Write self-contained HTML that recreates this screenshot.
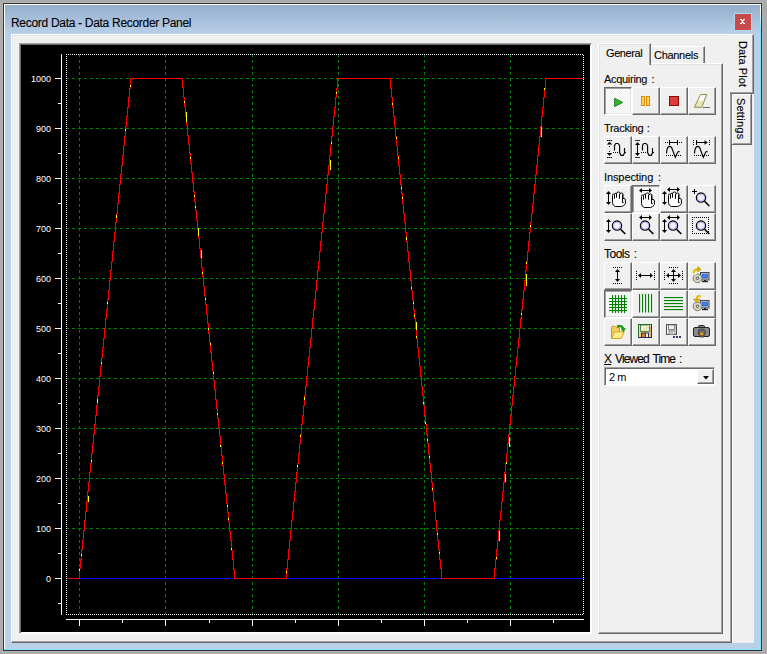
<!DOCTYPE html>
<html><head><meta charset="utf-8"><title>Record Data - Data Recorder Panel</title>
<style>
*{margin:0;padding:0;box-sizing:border-box}
html,body{width:767px;height:654px;overflow:hidden;background:#ababab;font-family:"Liberation Sans", sans-serif;position:relative}
div{position:absolute}
#ring{left:2px;top:2px;width:761px;height:650px;background:#b3b3b3}
#frame{left:3px;top:3px;width:759px;height:648px;background:#333}
#hl{left:4px;top:4px;width:757px;height:646px;background:#fff}
#hlr{left:760px;top:4px;width:1px;height:646px;background:linear-gradient(180deg,#fff 0,#fff 6px,#7fe3ff 26px,#7fe3ff 100%)}
#hlb{left:4px;top:649px;width:757px;height:1px;background:#7fe3ff}
#blue{left:5px;top:5px;width:755px;height:644px;background:linear-gradient(180deg,#94aecb 0px,#b9d0e9 29px,#bad0e8 100%)}
#title{left:11px;top:16px;font-size:12px;color:#000;-webkit-text-stroke:0.1px #000;white-space:nowrap;letter-spacing:-0.3px}
#close{left:735px;top:14px;width:16px;height:16px;background:#c84a4a;box-shadow:0 0 0 1px #b8d4ec}
#close svg{position:absolute;left:0;top:0}
#client{left:11px;top:34px;width:743px;height:609px;background:#f0f0f0}
#page{left:11px;top:34px;width:721px;height:609px;border-top:1px solid #fff;border-left:1px solid #fff;border-right:1px solid #696969;border-bottom:1px solid #696969;box-shadow:inset -1px -1px 0 #a0a0a0, inset 1px 1px 0 #e3e3e3}
#vtab1{left:730px;top:34px;width:24px;height:60px;background:#f0f0f0;border-top:1px solid #fff;border-right:1px solid #696969;border-bottom:1px solid #696969;box-shadow:inset -1px -1px 0 #a0a0a0}
#vtab2{left:731px;top:93px;width:21px;height:52px;background:#f0f0f0;border-left:1px solid #808080;border-top:1px solid #696969;border-right:1px solid #696969;border-bottom:1px solid #696969;box-shadow:inset 1px 1px 0 #fff, inset -1px -1px 0 #a0a0a0}
#pgw{left:732px;top:145px;width:1px;height:497px;background:#fff}
.vtxt{font-size:11px;white-space:nowrap;color:#000;-webkit-text-stroke:0.1px #000;transform-origin:0 0;transform:rotate(90deg) translate(0,-12px)}
#chartbox{left:19px;top:43px;width:573px;height:591px;background:#fff;border-top:1px solid #a0a0a0;border-left:1px solid #a0a0a0;border-right:1px solid #fff;border-bottom:1px solid #fff;box-shadow:inset 1px 1px 0 #696969}
#chart{position:absolute;left:0;top:0;font-family:"Liberation Sans", sans-serif;font-size:9px;fill:#fff}
#ipanel{left:598px;top:63px;width:125px;height:571px;background:#f0f0f0;border-top:1px solid #fff;border-left:1px solid #fff;border-right:1px solid #696969;border-bottom:1px solid #696969;box-shadow:inset -1px -1px 0 #a0a0a0, inset 1px 1px 0 #e3e3e3}
#tabGen{left:598px;top:43px;width:53px;height:22px;background:#f0f0f0;border-top:1px solid #fff;border-left:1px solid #fff;border-right:1px solid #696969;box-shadow:inset -1px 0 0 #a0a0a0, inset 1px 1px 0 #e3e3e3;font-size:11px;-webkit-text-stroke:0.1px #000;padding:3px 0 0 7px;letter-spacing:-0.4px}
#tabCh{left:651px;top:46px;width:54px;height:17px;background:#f0f0f0;border-top:1px solid #fff;border-right:1px solid #696969;box-shadow:inset -1px 0 0 #a0a0a0;font-size:11px;-webkit-text-stroke:0.1px #000;padding:2px 0 0 3px;letter-spacing:-0.3px}
.lbl{font-size:11px;white-space:nowrap;color:#000;-webkit-text-stroke:0.1px #000;letter-spacing:-0.3px;word-spacing:1.5px}
.btn{width:28px;height:28px;background:#f0f0f0;border-top:1px solid #fff;border-left:1px solid #fff;border-right:1px solid #696969;border-bottom:1px solid #696969;box-shadow:inset -1px -1px 0 #a0a0a0}
.btn.chk{border-top:1px solid #696969;border-left:1px solid #696969;border-right:1px solid #fff;border-bottom:1px solid #fff;box-shadow:inset 1px 1px 0 #a0a0a0, inset -1px -1px 0 #e3e3e3;background:repeating-conic-gradient(#f0f0f0 0 25%,#fff 0 50%) 0 0/2px 2px}
.btn svg{position:absolute;left:-1px;top:-1px}
#combo{left:604px;top:367px;width:111px;height:19px;background:#fff;border-top:1px solid #a0a0a0;border-left:1px solid #a0a0a0;border-right:1px solid #fff;border-bottom:1px solid #fff;box-shadow:inset 1px 1px 0 #696969}
#ctext{left:4px;top:3px;font-size:11px;letter-spacing:-0.5px}
#cbtn{left:92px;top:1px;width:17px;height:15px;background:#f0f0f0;border-top:1px solid #fff;border-left:1px solid #fff;border-right:1px solid #696969;border-bottom:1px solid #696969;box-shadow:inset -1px -1px 0 #a0a0a0}
#cbtn svg{position:absolute;left:5px;top:6px}
</style></head>
<body>
<div id="ring"></div><div id="frame"></div><div id="hl"></div><div id="hlr"></div><div id="hlb"></div><div id="blue"></div>
<div id="title">Record Data - Data Recorder Panel</div>
<div id="close"><svg width="16" height="16" viewBox="0 0 16 16" shape-rendering="crispEdges"><rect x="5" y="5" width="1" height="1" fill="#fff"/><rect x="6" y="5" width="1" height="1" fill="#fff"/><rect x="8" y="5" width="1" height="1" fill="#fff"/><rect x="9" y="5" width="1" height="1" fill="#fff"/><rect x="6" y="6" width="1" height="1" fill="#fff"/><rect x="7" y="6" width="1" height="1" fill="#fff"/><rect x="8" y="6" width="1" height="1" fill="#fff"/><rect x="7" y="7" width="1" height="1" fill="#fff"/><rect x="6" y="8" width="1" height="1" fill="#fff"/><rect x="7" y="8" width="1" height="1" fill="#fff"/><rect x="8" y="8" width="1" height="1" fill="#fff"/><rect x="5" y="9" width="1" height="1" fill="#fff"/><rect x="6" y="9" width="1" height="1" fill="#fff"/><rect x="8" y="9" width="1" height="1" fill="#fff"/><rect x="9" y="9" width="1" height="1" fill="#fff"/></svg></div>
<div id="client"></div>
<div id="page"></div>
<div id="vtab1"></div><div id="vtab2"></div><div id="pgw"></div>
<div class="vtxt" style="left:737px;top:41px;letter-spacing:0.1px">Data Plot</div>
<div class="vtxt" style="left:735px;top:98px;letter-spacing:0.2px">Settings</div>
<div id="chartbox"></div>
<svg id="chart" width="767" height="654" viewBox="0 0 767 654" shape-rendering="crispEdges"><rect x="21" y="45" width="569" height="587" fill="#000"/>
<line x1="79.5" y1="54" x2="79.5" y2="614" stroke="#008000" stroke-width="1" stroke-dasharray="3 3"/>
<line x1="165.5" y1="54" x2="165.5" y2="614" stroke="#008000" stroke-width="1" stroke-dasharray="3 3"/>
<line x1="252.5" y1="54" x2="252.5" y2="614" stroke="#008000" stroke-width="1" stroke-dasharray="3 3"/>
<line x1="338.5" y1="54" x2="338.5" y2="614" stroke="#008000" stroke-width="1" stroke-dasharray="3 3"/>
<line x1="424.5" y1="54" x2="424.5" y2="614" stroke="#008000" stroke-width="1" stroke-dasharray="3 3"/>
<line x1="510.5" y1="54" x2="510.5" y2="614" stroke="#008000" stroke-width="1" stroke-dasharray="3 3"/>
<line x1="66" y1="78.5" x2="583" y2="78.5" stroke="#008000" stroke-width="1" stroke-dasharray="3 3"/>
<line x1="66" y1="128.5" x2="583" y2="128.5" stroke="#008000" stroke-width="1" stroke-dasharray="3 3"/>
<line x1="66" y1="178.5" x2="583" y2="178.5" stroke="#008000" stroke-width="1" stroke-dasharray="3 3"/>
<line x1="66" y1="228.5" x2="583" y2="228.5" stroke="#008000" stroke-width="1" stroke-dasharray="3 3"/>
<line x1="66" y1="278.5" x2="583" y2="278.5" stroke="#008000" stroke-width="1" stroke-dasharray="3 3"/>
<line x1="66" y1="328.5" x2="583" y2="328.5" stroke="#008000" stroke-width="1" stroke-dasharray="3 3"/>
<line x1="66" y1="378.5" x2="583" y2="378.5" stroke="#008000" stroke-width="1" stroke-dasharray="3 3"/>
<line x1="66" y1="428.5" x2="583" y2="428.5" stroke="#008000" stroke-width="1" stroke-dasharray="3 3"/>
<line x1="66" y1="478.5" x2="583" y2="478.5" stroke="#008000" stroke-width="1" stroke-dasharray="3 3"/>
<line x1="66" y1="528.5" x2="583" y2="528.5" stroke="#008000" stroke-width="1" stroke-dasharray="3 3"/>
<line x1="66" y1="578.5" x2="583" y2="578.5" stroke="#008000" stroke-width="1" stroke-dasharray="3 3"/>
<rect x="61" y="54" width="1" height="561" fill="#fff"/>
<rect x="55" y="78" width="6" height="1" fill="#fff"/>
<rect x="58" y="103" width="3" height="1" fill="#fff"/>
<text x="51" y="82" text-anchor="end">1000</text>
<rect x="55" y="128" width="6" height="1" fill="#fff"/>
<rect x="58" y="153" width="3" height="1" fill="#fff"/>
<text x="51" y="132" text-anchor="end">900</text>
<rect x="55" y="178" width="6" height="1" fill="#fff"/>
<rect x="58" y="203" width="3" height="1" fill="#fff"/>
<text x="51" y="182" text-anchor="end">800</text>
<rect x="55" y="228" width="6" height="1" fill="#fff"/>
<rect x="58" y="253" width="3" height="1" fill="#fff"/>
<text x="51" y="232" text-anchor="end">700</text>
<rect x="55" y="278" width="6" height="1" fill="#fff"/>
<rect x="58" y="303" width="3" height="1" fill="#fff"/>
<text x="51" y="282" text-anchor="end">600</text>
<rect x="55" y="328" width="6" height="1" fill="#fff"/>
<rect x="58" y="353" width="3" height="1" fill="#fff"/>
<text x="51" y="332" text-anchor="end">500</text>
<rect x="55" y="378" width="6" height="1" fill="#fff"/>
<rect x="58" y="403" width="3" height="1" fill="#fff"/>
<text x="51" y="382" text-anchor="end">400</text>
<rect x="55" y="428" width="6" height="1" fill="#fff"/>
<rect x="58" y="453" width="3" height="1" fill="#fff"/>
<text x="51" y="432" text-anchor="end">300</text>
<rect x="55" y="478" width="6" height="1" fill="#fff"/>
<rect x="58" y="503" width="3" height="1" fill="#fff"/>
<text x="51" y="482" text-anchor="end">200</text>
<rect x="55" y="528" width="6" height="1" fill="#fff"/>
<rect x="58" y="553" width="3" height="1" fill="#fff"/>
<text x="51" y="532" text-anchor="end">100</text>
<rect x="55" y="578" width="6" height="1" fill="#fff"/>
<rect x="58" y="603" width="3" height="1" fill="#fff"/>
<text x="51" y="582" text-anchor="end">0</text>
<rect x="66" y="619" width="518" height="1" fill="#fff"/>
<rect x="79" y="620" width="1" height="6" fill="#fff"/>
<rect x="165" y="620" width="1" height="6" fill="#fff"/>
<rect x="252" y="620" width="1" height="6" fill="#fff"/>
<rect x="338" y="620" width="1" height="6" fill="#fff"/>
<rect x="424" y="620" width="1" height="6" fill="#fff"/>
<rect x="510" y="620" width="1" height="6" fill="#fff"/>
<rect x="122" y="620" width="1" height="3" fill="#fff"/>
<rect x="209" y="620" width="1" height="3" fill="#fff"/>
<rect x="295" y="620" width="1" height="3" fill="#fff"/>
<rect x="381" y="620" width="1" height="3" fill="#fff"/>
<rect x="467" y="620" width="1" height="3" fill="#fff"/>
<rect x="553" y="620" width="1" height="3" fill="#fff"/>
<rect x="79" y="578" width="505" height="1" fill="#0000ff"/>
<path d="M66.5,578.5 H79.5 V568.5 H80.5 V559.5 H81.5 V549.5 H82.5 V540.5 H83.5 V530.5 H84.5 V520.5 H85.5 V511.5 H86.5 V501.5 H87.5 V491.5 H88.5 V482.5 H89.5 V472.5 H90.5 V463.5 H91.5 V453.5 H92.5 V443.5 H93.5 V434.5 H94.5 V424.5 H95.5 V415.5 H96.5 V405.5 H97.5 V395.5 H98.5 V386.5 H99.5 V376.5 H100.5 V366.5 H101.5 V357.5 H102.5 V347.5 H103.5 V338.5 H104.5 V328.5 H105.5 V318.5 H106.5 V309.5 H107.5 V299.5 H108.5 V290.5 H109.5 V280.5 H110.5 V270.5 H111.5 V261.5 H112.5 V251.5 H113.5 V241.5 H114.5 V232.5 H115.5 V222.5 H116.5 V213.5 H117.5 V203.5 H118.5 V193.5 H119.5 V184.5 H120.5 V174.5 H121.5 V165.5 H122.5 V155.5 H123.5 V145.5 H124.5 V136.5 H125.5 V126.5 H126.5 V116.5 H127.5 V107.5 H128.5 V97.5 H129.5 V88.5 H130.5 V78.5 H131.5 H182.5 V87.5 H183.5 V97.5 H184.5 V106.5 H185.5 V116.5 H186.5 V125.5 H187.5 V135.5 H188.5 V144.5 H189.5 V153.5 H190.5 V163.5 H191.5 V172.5 H192.5 V182.5 H193.5 V191.5 H194.5 V201.5 H195.5 V210.5 H196.5 V220.5 H197.5 V229.5 H198.5 V238.5 H199.5 V248.5 H200.5 V257.5 H201.5 V267.5 H202.5 V276.5 H203.5 V286.5 H204.5 V295.5 H205.5 V304.5 H206.5 V314.5 H207.5 V323.5 H208.5 V333.5 H209.5 V342.5 H210.5 V352.5 H211.5 V361.5 H212.5 V370.5 H213.5 V380.5 H214.5 V389.5 H215.5 V399.5 H216.5 V408.5 H217.5 V418.5 H218.5 V427.5 H219.5 V436.5 H220.5 V446.5 H221.5 V455.5 H222.5 V465.5 H223.5 V474.5 H224.5 V484.5 H225.5 V493.5 H226.5 V503.5 H227.5 V512.5 H228.5 V521.5 H229.5 V531.5 H230.5 V540.5 H231.5 V550.5 H232.5 V559.5 H233.5 V569.5 H234.5 V578.5 H235.5 H286.5 V568.5 H287.5 V559.5 H288.5 V549.5 H289.5 V540.5 H290.5 V530.5 H291.5 V520.5 H292.5 V511.5 H293.5 V501.5 H294.5 V491.5 H295.5 V482.5 H296.5 V472.5 H297.5 V463.5 H298.5 V453.5 H299.5 V443.5 H300.5 V434.5 H301.5 V424.5 H302.5 V415.5 H303.5 V405.5 H304.5 V395.5 H305.5 V386.5 H306.5 V376.5 H307.5 V366.5 H308.5 V357.5 H309.5 V347.5 H310.5 V338.5 H311.5 V328.5 H312.5 V318.5 H313.5 V309.5 H314.5 V299.5 H315.5 V290.5 H316.5 V280.5 H317.5 V270.5 H318.5 V261.5 H319.5 V251.5 H320.5 V241.5 H321.5 V232.5 H322.5 V222.5 H323.5 V213.5 H324.5 V203.5 H325.5 V193.5 H326.5 V184.5 H327.5 V174.5 H328.5 V165.5 H329.5 V155.5 H330.5 V145.5 H331.5 V136.5 H332.5 V126.5 H333.5 V116.5 H334.5 V107.5 H335.5 V97.5 H336.5 V88.5 H337.5 V78.5 H338.5 H390.5 V88.5 H391.5 V97.5 H392.5 V107.5 H393.5 V116.5 H394.5 V126.5 H395.5 V136.5 H396.5 V145.5 H397.5 V155.5 H398.5 V165.5 H399.5 V174.5 H400.5 V184.5 H401.5 V193.5 H402.5 V203.5 H403.5 V213.5 H404.5 V222.5 H405.5 V232.5 H406.5 V241.5 H407.5 V251.5 H408.5 V261.5 H409.5 V270.5 H410.5 V280.5 H411.5 V290.5 H412.5 V299.5 H413.5 V309.5 H414.5 V318.5 H415.5 V328.5 H416.5 V338.5 H417.5 V347.5 H418.5 V357.5 H419.5 V366.5 H420.5 V376.5 H421.5 V386.5 H422.5 V395.5 H423.5 V405.5 H424.5 V415.5 H425.5 V424.5 H426.5 V434.5 H427.5 V443.5 H428.5 V453.5 H429.5 V463.5 H430.5 V472.5 H431.5 V482.5 H432.5 V491.5 H433.5 V501.5 H434.5 V511.5 H435.5 V520.5 H436.5 V530.5 H437.5 V540.5 H438.5 V549.5 H439.5 V559.5 H440.5 V568.5 H441.5 V578.5 H442.5 H494.5 V568.5 H495.5 V559.5 H496.5 V549.5 H497.5 V540.5 H498.5 V530.5 H499.5 V520.5 H500.5 V511.5 H501.5 V501.5 H502.5 V491.5 H503.5 V482.5 H504.5 V472.5 H505.5 V463.5 H506.5 V453.5 H507.5 V443.5 H508.5 V434.5 H509.5 V424.5 H510.5 V415.5 H511.5 V405.5 H512.5 V395.5 H513.5 V386.5 H514.5 V376.5 H515.5 V366.5 H516.5 V357.5 H517.5 V347.5 H518.5 V338.5 H519.5 V328.5 H520.5 V318.5 H521.5 V309.5 H522.5 V299.5 H523.5 V290.5 H524.5 V280.5 H525.5 V270.5 H526.5 V261.5 H527.5 V251.5 H528.5 V241.5 H529.5 V232.5 H530.5 V222.5 H531.5 V213.5 H532.5 V203.5 H533.5 V193.5 H534.5 V184.5 H535.5 V174.5 H536.5 V165.5 H537.5 V155.5 H538.5 V145.5 H539.5 V136.5 H540.5 V126.5 H541.5 V116.5 H542.5 V107.5 H543.5 V97.5 H544.5 V88.5 H545.5 V78.5 H546.5 H583.5" fill="none" stroke="#ff0000" stroke-width="1"/>
<rect x="130" y="85" width="1" height="2" fill="#ffff00"/>
<rect x="125" y="129" width="1" height="2" fill="#ffff00"/>
<rect x="116" y="215" width="1" height="3" fill="#ffff00"/>
<rect x="107" y="302" width="1" height="2" fill="#ffff00"/>
<rect x="101" y="362" width="1" height="2" fill="#ffff00"/>
<rect x="97" y="399" width="1" height="4" fill="#ffff00"/>
<rect x="91" y="460" width="1" height="2" fill="#ffff00"/>
<rect x="88" y="496" width="1" height="6" fill="#ffff00"/>
<rect x="81" y="554" width="1" height="2" fill="#ffff00"/>
<rect x="79" y="569" width="1" height="2" fill="#ffff00"/>
<rect x="184" y="101" width="1" height="2" fill="#ffff00"/>
<rect x="186" y="112" width="1" height="10" fill="#ffff00"/>
<rect x="190" y="157" width="1" height="2" fill="#ffff00"/>
<rect x="194" y="195" width="1" height="2" fill="#ffff00"/>
<rect x="195" y="206" width="1" height="2" fill="#ffff00"/>
<rect x="198" y="228" width="1" height="8" fill="#ffff00"/>
<rect x="201" y="250" width="1" height="8" fill="#ffff00"/>
<rect x="202" y="272" width="1" height="2" fill="#ffff00"/>
<rect x="205" y="298" width="1" height="2" fill="#ffff00"/>
<rect x="208" y="328" width="1" height="2" fill="#ffff00"/>
<rect x="210" y="343" width="1" height="2" fill="#ffff00"/>
<rect x="213" y="372" width="1" height="2" fill="#ffff00"/>
<rect x="217" y="413" width="1" height="2" fill="#ffff00"/>
<rect x="220" y="445" width="1" height="2" fill="#ffff00"/>
<rect x="222" y="462" width="1" height="2" fill="#ffff00"/>
<rect x="227" y="505" width="1" height="2" fill="#ffff00"/>
<rect x="228" y="518" width="1" height="2" fill="#ffff00"/>
<rect x="231" y="548" width="1" height="2" fill="#ffff00"/>
<rect x="336" y="92" width="1" height="2" fill="#ffff00"/>
<rect x="331" y="142" width="1" height="2" fill="#ffff00"/>
<rect x="330" y="160" width="1" height="10" fill="#ffff00"/>
<rect x="304" y="397" width="1" height="3" fill="#ffff00"/>
<rect x="300" y="435" width="1" height="2" fill="#ffff00"/>
<rect x="297" y="465" width="1" height="2" fill="#ffff00"/>
<rect x="286" y="571" width="1" height="2" fill="#ffff00"/>
<rect x="392" y="103" width="1" height="2" fill="#ffff00"/>
<rect x="396" y="137" width="1" height="2" fill="#ffff00"/>
<rect x="398" y="157" width="1" height="2" fill="#ffff00"/>
<rect x="401" y="187" width="1" height="2" fill="#ffff00"/>
<rect x="402" y="197" width="1" height="2" fill="#ffff00"/>
<rect x="406" y="237" width="1" height="3" fill="#ffff00"/>
<rect x="411" y="287" width="1" height="2" fill="#ffff00"/>
<rect x="413" y="302" width="1" height="2" fill="#ffff00"/>
<rect x="414" y="315" width="1" height="2" fill="#ffff00"/>
<rect x="416" y="322" width="1" height="8" fill="#ffff00"/>
<rect x="416" y="336" width="1" height="2" fill="#ffff00"/>
<rect x="423" y="402" width="1" height="2" fill="#ffff00"/>
<rect x="425" y="422" width="1" height="2" fill="#ffff00"/>
<rect x="427" y="439" width="1" height="2" fill="#ffff00"/>
<rect x="429" y="456" width="1" height="2" fill="#ffff00"/>
<rect x="432" y="488" width="1" height="2" fill="#ffff00"/>
<rect x="437" y="533" width="1" height="2" fill="#ffff00"/>
<rect x="439" y="552" width="1" height="2" fill="#ffff00"/>
<rect x="544" y="88" width="1" height="2" fill="#ffff00"/>
<rect x="541" y="127" width="1" height="10" fill="#ffff00"/>
<rect x="530" y="225" width="1" height="2" fill="#ffff00"/>
<rect x="526" y="262" width="1" height="2" fill="#ffff00"/>
<rect x="526" y="274" width="1" height="12" fill="#ffff00"/>
<rect x="521" y="313" width="1" height="2" fill="#ffff00"/>
<rect x="509" y="437" width="1" height="10" fill="#ffff00"/>
<rect x="506" y="462" width="1" height="2" fill="#ffff00"/>
<rect x="505" y="474" width="1" height="8" fill="#ffff00"/>
<rect x="499" y="531" width="1" height="10" fill="#ffff00"/>
<rect x="496" y="557" width="1" height="2" fill="#ffff00"/>
<line x1="66" y1="54.5" x2="584" y2="54.5" stroke="#fff" stroke-dasharray="1 1"/>
<line x1="66" y1="614.5" x2="584" y2="614.5" stroke="#fff" stroke-dasharray="1 1"/>
<line x1="66.5" y1="54" x2="66.5" y2="615" stroke="#fff" stroke-dasharray="1 1"/>
<line x1="583.5" y1="55" x2="583.5" y2="615" stroke="#fff" stroke-dasharray="1 1"/></svg>
<div id="ipanel"></div>
<div id="tabGen">General</div>
<div id="tabCh">Channels</div>
<div class="lbl" style="left:604px;top:73px;">Acquiring :</div>
<div class="lbl" style="left:604px;top:122px;word-spacing:0.5px">Tracking :</div>
<div class="lbl" style="left:604px;top:171px;letter-spacing:-0.1px;word-spacing:2px">Inspecting :</div>
<div class="lbl" style="left:604px;top:247px;font-size:12px;letter-spacing:-0.5px">Tools :</div>
<div class="lbl" style="left:604px;top:352px;font-size:12px;letter-spacing:-0.9px"><u>X</u> Viewed Time :</div>
<div class="btn chk" style="left:604px;top:87px"><svg width="28" height="28" viewBox="0 0 28 28"><path d="M10.6 11.3L18.8 15.4L10.6 19.6Z" fill="#35b335" stroke="#1a7a1a" stroke-width="0.9" stroke-linejoin="round"/></svg></div>
<div class="btn" style="left:632px;top:87px"><svg width="28" height="28" viewBox="0 0 28 28"><rect x="9.5" y="9.5" width="3" height="9" fill="#ffd84a" stroke="#d88a10" stroke-width="1"/><rect x="14.5" y="9.5" width="3" height="9" fill="#ffd84a" stroke="#d88a10" stroke-width="1"/></svg></div>
<div class="btn" style="left:660px;top:87px"><svg width="28" height="28" viewBox="0 0 28 28"><rect x="9.5" y="9.5" width="9" height="9" fill="#e03a3a" stroke="#8a0a0a" stroke-width="1"/></svg></div>
<div class="btn" style="left:688px;top:87px"><svg width="28" height="28" viewBox="0 0 28 28"><path d="M12.6 7.5H18.8L13.8 20.3H6.3Z" fill="#e8e8b0" stroke="#8c8c5c" stroke-width="1"/><path d="M13 8.3H17.8L15.3 13.8H10.3Z" fill="#fff"/><rect x="15" y="20" width="7" height="1" fill="#666"/></svg></div>
<div class="btn" style="left:604px;top:136px"><svg width="28" height="28" viewBox="0 0 28 28"><rect x="3" y="4" width="1" height="1" fill="#000"/><rect x="5" y="4" width="1" height="1" fill="#000"/><rect x="7" y="4" width="1" height="1" fill="#000"/><rect x="3" y="4" width="5" height="1" fill="#000" opacity="0.6"/><path d="M5.5 5.8L8.2 8.6H2.8Z" fill="#000"/><rect x="5" y="10" width="1" height="1" fill="#000"/><rect x="5" y="15" width="1" height="1" fill="#000"/><path d="M5.5 19.8L8.2 17H2.8Z" fill="#000"/><rect x="3" y="21" width="1" height="1" fill="#000"/><rect x="5" y="21" width="1" height="1" fill="#000"/><rect x="7" y="21" width="1" height="1" fill="#000"/><rect x="3" y="21" width="5" height="1" fill="#000" opacity="0.6"/><g transform="translate(0,0)"><rect x="9" y="16" width="1" height="1" fill="#000"/><rect x="11" y="16" width="1" height="1" fill="#000"/><rect x="13" y="16" width="1" height="1" fill="#000"/><path d="M10.5 14.5V9.5L11.8 7.5H14L15.6 9.5V16.5L17 19.3H19.2L20.5 17V12" fill="none" stroke="#000" stroke-width="1.15"/><rect x="21" y="16" width="1" height="1" fill="#000"/></g></svg></div>
<div class="btn" style="left:632px;top:136px"><svg width="28" height="28" viewBox="0 0 28 28"><rect x="3" y="4" width="5" height="1" fill="#000" opacity="0.8"/><rect x="5" y="8" width="1" height="10" fill="#000"/><path d="M5.5 6 L8.0 9 L3.0 9Z" fill="#000"/><path d="M5.5 20 L8.0 17 L3.0 17Z" fill="#000"/><rect x="3" y="21" width="5" height="1" fill="#000" opacity="0.8"/><g transform="translate(0,0)"><rect x="9" y="16" width="1" height="1" fill="#000"/><rect x="11" y="16" width="1" height="1" fill="#000"/><rect x="13" y="16" width="1" height="1" fill="#000"/><path d="M10.5 14.5V9.5L11.8 7.5H14L15.6 9.5V16.5L17 19.3H19.2L20.5 17V12" fill="none" stroke="#000" stroke-width="1.15"/><rect x="21" y="16" width="1" height="1" fill="#000"/></g></svg></div>
<div class="btn" style="left:660px;top:136px"><svg width="28" height="28" viewBox="0 0 28 28"><rect x="5" y="6" width="1" height="1" fill="#000"/><rect x="7" y="6" width="1" height="1" fill="#000"/><rect x="19" y="6" width="1" height="1" fill="#000"/><rect x="21" y="6" width="1" height="1" fill="#000"/><rect x="9" y="4" width="1" height="5" fill="#000"/><rect x="17" y="4" width="1" height="5" fill="#000"/><rect x="9" y="6" width="9" height="1" fill="#000"/><rect x="6" y="19" width="1" height="1" fill="#000"/><rect x="8" y="19" width="1" height="1" fill="#000"/><rect x="10" y="19" width="1" height="1" fill="#000"/><rect x="12" y="19" width="1" height="1" fill="#000"/><rect x="14" y="19" width="1" height="1" fill="#000"/><rect x="16" y="19" width="1" height="1" fill="#000"/><rect x="18" y="19" width="1" height="1" fill="#000"/><rect x="20" y="19" width="1" height="1" fill="#000"/><path d="M6.5 17.5L6.9 13.8Q7.8 10.4 9.8 10.4Q11.6 10.4 12.4 13.5L15.3 21.2L17.8 16Q18.6 15 19.6 16.2" fill="none" stroke="#000" stroke-width="1.15"/></svg></div>
<div class="btn" style="left:688px;top:136px"><svg width="28" height="28" viewBox="0 0 28 28"><rect x="5" y="4" width="1" height="1" fill="#000"/><rect x="5" y="6" width="1" height="1" fill="#000"/><rect x="5" y="8" width="1" height="1" fill="#000"/><rect x="21" y="4" width="1" height="1" fill="#000"/><rect x="21" y="6" width="1" height="1" fill="#000"/><rect x="21" y="8" width="1" height="1" fill="#000"/><rect x="8" y="4" width="1" height="5" fill="#000"/><rect x="8" y="6" width="10" height="1" fill="#000"/><path d="M16.5 4.2L19.8 6.5L16.5 8.8Z" fill="#000"/><rect x="6" y="19" width="1" height="1" fill="#000"/><rect x="8" y="19" width="1" height="1" fill="#000"/><rect x="10" y="19" width="1" height="1" fill="#000"/><rect x="12" y="19" width="1" height="1" fill="#000"/><rect x="14" y="19" width="1" height="1" fill="#000"/><rect x="16" y="19" width="1" height="1" fill="#000"/><rect x="18" y="19" width="1" height="1" fill="#000"/><rect x="20" y="19" width="1" height="1" fill="#000"/><path d="M6.5 17.5L6.9 13.8Q7.8 10.4 9.8 10.4Q11.6 10.4 12.4 13.5L15.3 21.2L17.8 16Q18.6 15 19.6 16.2" fill="none" stroke="#000" stroke-width="1.15"/></svg></div>
<div class="btn" style="left:604px;top:185px"><svg width="28" height="28" viewBox="0 0 28 28"><rect x="4" y="8" width="1" height="10" fill="#000"/><path d="M4.5 6 L7.0 9 L2.0 9Z" fill="#000"/><path d="M4.5 20 L7.0 17 L2.0 17Z" fill="#000"/><g transform="translate(0,0)"><path d="M11.2 21.5H17.3Q19.6 21.5 21.4 18.6V15Q21.4 13.5 20.2 13.5H19V9.4Q19 8 17.7 8Q16.3 8 16.1 9.2V8.3Q16 7 14.4 7Q12.8 7 12.6 8.3V9.1Q12.4 8.3 11.5 8.3Q10.6 8.3 10.4 9.4Q10.1 9 9.4 9Q8.5 9 8.5 10.4V17.6Q8.5 20.2 11.2 21.5Z" fill="#fff" stroke="#000" stroke-width="1"/><path d="M10.5 9.5V13.7M12.5 8.6V12.6M15.5 8.8V13.7M18.5 9.4V17.6H19.8" fill="none" stroke="#000" stroke-width="1"/></g></svg></div>
<div class="btn chk" style="left:632px;top:185px"><svg width="28" height="28" viewBox="0 0 28 28"><rect x="9" y="5" width="9" height="1" fill="#000"/><path d="M7 5.5 L10 3.0 L10 8.0Z" fill="#000"/><path d="M20 5.5 L17 3.0 L17 8.0Z" fill="#000"/><g transform="translate(1,1)"><path d="M11.2 21.5H17.3Q19.6 21.5 21.4 18.6V15Q21.4 13.5 20.2 13.5H19V9.4Q19 8 17.7 8Q16.3 8 16.1 9.2V8.3Q16 7 14.4 7Q12.8 7 12.6 8.3V9.1Q12.4 8.3 11.5 8.3Q10.6 8.3 10.4 9.4Q10.1 9 9.4 9Q8.5 9 8.5 10.4V17.6Q8.5 20.2 11.2 21.5Z" fill="#fff" stroke="#000" stroke-width="1"/><path d="M10.5 9.5V13.7M12.5 8.6V12.6M15.5 8.8V13.7M18.5 9.4V17.6H19.8" fill="none" stroke="#000" stroke-width="1"/></g></svg></div>
<div class="btn" style="left:660px;top:185px"><svg width="28" height="28" viewBox="0 0 28 28"><rect x="9" y="4" width="9" height="1" fill="#000"/><path d="M7 4.5 L10 2.0 L10 7.0Z" fill="#000"/><path d="M20 4.5 L17 2.0 L17 7.0Z" fill="#000"/><rect x="4" y="8" width="1" height="10" fill="#000"/><path d="M4.5 6 L7.0 9 L2.0 9Z" fill="#000"/><path d="M4.5 20 L7.0 17 L2.0 17Z" fill="#000"/><g transform="translate(0,0)"><path d="M11.2 21.5H17.3Q19.6 21.5 21.4 18.6V15Q21.4 13.5 20.2 13.5H19V9.4Q19 8 17.7 8Q16.3 8 16.1 9.2V8.3Q16 7 14.4 7Q12.8 7 12.6 8.3V9.1Q12.4 8.3 11.5 8.3Q10.6 8.3 10.4 9.4Q10.1 9 9.4 9Q8.5 9 8.5 10.4V17.6Q8.5 20.2 11.2 21.5Z" fill="#fff" stroke="#000" stroke-width="1"/><path d="M10.5 9.5V13.7M12.5 8.6V12.6M15.5 8.8V13.7M18.5 9.4V17.6H19.8" fill="none" stroke="#000" stroke-width="1"/></g></svg></div>
<div class="btn" style="left:688px;top:185px"><svg width="28" height="28" viewBox="0 0 28 28"><rect x="4" y="6" width="5" height="1" fill="#000"/><rect x="6" y="4" width="1" height="5" fill="#000"/><g transform="translate(0,0)"><circle cx="13" cy="12.6" r="4.6" fill="#f0f0ff" stroke="#000" stroke-width="1.3"/><circle cx="13" cy="12.6" r="3.6" fill="none" stroke="#a8a8ff" stroke-width="0.9"/><path d="M16.6 16.3L21.3 21" stroke="#000" stroke-width="1.6"/></g></svg></div>
<div class="btn" style="left:604px;top:213px"><svg width="28" height="28" viewBox="0 0 28 28"><rect x="4" y="8" width="1" height="10" fill="#000"/><path d="M4.5 6 L7.0 9 L2.0 9Z" fill="#000"/><path d="M4.5 20 L7.0 17 L2.0 17Z" fill="#000"/><g transform="translate(0,0)"><circle cx="13" cy="12.6" r="4.6" fill="#f0f0ff" stroke="#000" stroke-width="1.3"/><circle cx="13" cy="12.6" r="3.6" fill="none" stroke="#a8a8ff" stroke-width="0.9"/><path d="M16.6 16.3L21.3 21" stroke="#000" stroke-width="1.6"/></g></svg></div>
<div class="btn" style="left:632px;top:213px"><svg width="28" height="28" viewBox="0 0 28 28"><rect x="9" y="4" width="9" height="1" fill="#000"/><path d="M7 4.5 L10 2.0 L10 7.0Z" fill="#000"/><path d="M20 4.5 L17 2.0 L17 7.0Z" fill="#000"/><g transform="translate(0,0)"><circle cx="13" cy="12.6" r="4.6" fill="#f0f0ff" stroke="#000" stroke-width="1.3"/><circle cx="13" cy="12.6" r="3.6" fill="none" stroke="#a8a8ff" stroke-width="0.9"/><path d="M16.6 16.3L21.3 21" stroke="#000" stroke-width="1.6"/></g></svg></div>
<div class="btn" style="left:660px;top:213px"><svg width="28" height="28" viewBox="0 0 28 28"><rect x="9" y="4" width="9" height="1" fill="#000"/><path d="M7 4.5 L10 2.0 L10 7.0Z" fill="#000"/><path d="M20 4.5 L17 2.0 L17 7.0Z" fill="#000"/><rect x="4" y="8" width="1" height="10" fill="#000"/><path d="M4.5 6 L7.0 9 L2.0 9Z" fill="#000"/><path d="M4.5 20 L7.0 17 L2.0 17Z" fill="#000"/><g transform="translate(0,0)"><circle cx="13" cy="12.6" r="4.6" fill="#f0f0ff" stroke="#000" stroke-width="1.3"/><circle cx="13" cy="12.6" r="3.6" fill="none" stroke="#a8a8ff" stroke-width="0.9"/><path d="M16.6 16.3L21.3 21" stroke="#000" stroke-width="1.6"/></g></svg></div>
<div class="btn" style="left:688px;top:213px"><svg width="28" height="28" viewBox="0 0 28 28"><rect x="4" y="4" width="1" height="1" fill="#000"/><rect x="6" y="4" width="1" height="1" fill="#000"/><rect x="8" y="4" width="1" height="1" fill="#000"/><rect x="10" y="4" width="1" height="1" fill="#000"/><rect x="12" y="4" width="1" height="1" fill="#000"/><rect x="14" y="4" width="1" height="1" fill="#000"/><rect x="16" y="4" width="1" height="1" fill="#000"/><rect x="18" y="4" width="1" height="1" fill="#000"/><rect x="20" y="4" width="1" height="1" fill="#000"/><rect x="4" y="20" width="1" height="1" fill="#000"/><rect x="6" y="20" width="1" height="1" fill="#000"/><rect x="8" y="20" width="1" height="1" fill="#000"/><rect x="10" y="20" width="1" height="1" fill="#000"/><rect x="12" y="20" width="1" height="1" fill="#000"/><rect x="14" y="20" width="1" height="1" fill="#000"/><rect x="16" y="20" width="1" height="1" fill="#000"/><rect x="18" y="20" width="1" height="1" fill="#000"/><rect x="20" y="20" width="1" height="1" fill="#000"/><rect x="4" y="4" width="1" height="1" fill="#000"/><rect x="4" y="6" width="1" height="1" fill="#000"/><rect x="4" y="8" width="1" height="1" fill="#000"/><rect x="4" y="10" width="1" height="1" fill="#000"/><rect x="4" y="12" width="1" height="1" fill="#000"/><rect x="4" y="14" width="1" height="1" fill="#000"/><rect x="4" y="16" width="1" height="1" fill="#000"/><rect x="4" y="18" width="1" height="1" fill="#000"/><rect x="4" y="20" width="1" height="1" fill="#000"/><rect x="20" y="4" width="1" height="1" fill="#000"/><rect x="20" y="6" width="1" height="1" fill="#000"/><rect x="20" y="8" width="1" height="1" fill="#000"/><rect x="20" y="10" width="1" height="1" fill="#000"/><rect x="20" y="12" width="1" height="1" fill="#000"/><rect x="20" y="14" width="1" height="1" fill="#000"/><rect x="20" y="16" width="1" height="1" fill="#000"/><rect x="20" y="18" width="1" height="1" fill="#000"/><rect x="20" y="20" width="1" height="1" fill="#000"/><g transform="translate(0,0)"><circle cx="13" cy="12.6" r="4.6" fill="#f0f0ff" stroke="#000" stroke-width="1.3"/><circle cx="13" cy="12.6" r="3.6" fill="none" stroke="#a8a8ff" stroke-width="0.9"/><path d="M16.6 16.3L21.3 21" stroke="#000" stroke-width="1.6"/></g></svg></div>
<div class="btn" style="left:604px;top:262px"><svg width="28" height="28" viewBox="0 0 28 28"><rect x="9" y="5" width="1" height="1" fill="#000"/><rect x="11" y="5" width="1" height="1" fill="#000"/><rect x="13" y="5" width="1" height="1" fill="#000"/><rect x="15" y="5" width="1" height="1" fill="#000"/><rect x="17" y="5" width="1" height="1" fill="#000"/><rect x="9" y="21" width="1" height="1" fill="#000"/><rect x="11" y="21" width="1" height="1" fill="#000"/><rect x="13" y="21" width="1" height="1" fill="#000"/><rect x="15" y="21" width="1" height="1" fill="#000"/><rect x="17" y="21" width="1" height="1" fill="#000"/><rect x="13" y="9" width="1" height="9" fill="#000"/><path d="M13.5 7 L16.0 10 L11.0 10Z" fill="#000"/><path d="M13.5 20 L16.0 17 L11.0 17Z" fill="#000"/></svg></div>
<div class="btn" style="left:632px;top:262px"><svg width="28" height="28" viewBox="0 0 28 28"><rect x="4" y="9" width="1" height="1" fill="#000"/><rect x="4" y="11" width="1" height="1" fill="#000"/><rect x="4" y="13" width="1" height="1" fill="#000"/><rect x="4" y="15" width="1" height="1" fill="#000"/><rect x="4" y="17" width="1" height="1" fill="#000"/><rect x="22" y="9" width="1" height="1" fill="#000"/><rect x="22" y="11" width="1" height="1" fill="#000"/><rect x="22" y="13" width="1" height="1" fill="#000"/><rect x="22" y="15" width="1" height="1" fill="#000"/><rect x="22" y="17" width="1" height="1" fill="#000"/><rect x="8" y="13" width="11" height="1" fill="#000"/><path d="M6 13.5 L9 11.0 L9 16.0Z" fill="#000"/><path d="M21 13.5 L18 11.0 L18 16.0Z" fill="#000"/></svg></div>
<div class="btn" style="left:660px;top:262px"><svg width="28" height="28" viewBox="0 0 28 28"><rect x="9" y="5" width="1" height="1" fill="#000"/><rect x="11" y="5" width="1" height="1" fill="#000"/><rect x="13" y="5" width="1" height="1" fill="#000"/><rect x="15" y="5" width="1" height="1" fill="#000"/><rect x="17" y="5" width="1" height="1" fill="#000"/><rect x="9" y="21" width="1" height="1" fill="#000"/><rect x="11" y="21" width="1" height="1" fill="#000"/><rect x="13" y="21" width="1" height="1" fill="#000"/><rect x="15" y="21" width="1" height="1" fill="#000"/><rect x="17" y="21" width="1" height="1" fill="#000"/><rect x="4" y="9" width="1" height="1" fill="#000"/><rect x="4" y="11" width="1" height="1" fill="#000"/><rect x="4" y="13" width="1" height="1" fill="#000"/><rect x="4" y="15" width="1" height="1" fill="#000"/><rect x="4" y="17" width="1" height="1" fill="#000"/><rect x="22" y="9" width="1" height="1" fill="#000"/><rect x="22" y="11" width="1" height="1" fill="#000"/><rect x="22" y="13" width="1" height="1" fill="#000"/><rect x="22" y="15" width="1" height="1" fill="#000"/><rect x="22" y="17" width="1" height="1" fill="#000"/><rect x="13" y="9" width="1" height="9" fill="#000"/><path d="M13.5 7 L16.0 10 L11.0 10Z" fill="#000"/><path d="M13.5 20 L16.0 17 L11.0 17Z" fill="#000"/><rect x="8" y="13" width="11" height="1" fill="#000"/><path d="M6 13.5 L9 11.0 L9 16.0Z" fill="#000"/><path d="M21 13.5 L18 11.0 L18 16.0Z" fill="#000"/></svg></div>
<div class="btn" style="left:688px;top:262px"><svg width="28" height="28" viewBox="0 0 28 28"><rect x="12.5" y="10.5" width="8.5" height="7.5" fill="#c8c8c8" stroke="#444" stroke-width="1"/><rect x="13.8" y="11.8" width="6" height="4.6" fill="#2a5fd8"/><rect x="14.8" y="12.6" width="4" height="2.6" fill="#4a88e8"/><rect x="16" y="18" width="2" height="1.2" fill="#222"/><rect x="14" y="19" width="6" height="1.2" fill="#222"/><circle cx="9.5" cy="16.3" r="4.4" fill="#d4d4bc" stroke="#7a7a7a" stroke-width="1"/><circle cx="9.5" cy="16.3" r="1.2" fill="#fff" stroke="#333" stroke-width="0.9"/><path d="M5.8 11.5Q5.8 7.3 9.5 7.3H10.5" fill="none" stroke="#e8c000" stroke-width="2.2"/><path d="M9.8 4.8L13 7.3L9.8 9.8Z" fill="#f0c800" stroke="#9a6a00" stroke-width="0.6"/><circle cx="7.6" cy="11.6" r="1.1" fill="#fff"/></svg></div>
<div class="btn chk" style="left:604px;top:290px"><svg width="28" height="28" viewBox="0 0 28 28"><rect x="8" y="5" width="1.1" height="18" fill="#008000"/><rect x="5" y="8" width="18" height="1.1" fill="#008000"/><rect x="11" y="5" width="1.1" height="18" fill="#008000"/><rect x="5" y="11" width="18" height="1.1" fill="#008000"/><rect x="14" y="5" width="1.1" height="18" fill="#008000"/><rect x="5" y="14" width="18" height="1.1" fill="#008000"/><rect x="17" y="5" width="1.1" height="18" fill="#008000"/><rect x="5" y="17" width="18" height="1.1" fill="#008000"/><rect x="20" y="5" width="1.1" height="18" fill="#008000"/><rect x="5" y="20" width="18" height="1.1" fill="#008000"/></svg></div>
<div class="btn" style="left:632px;top:290px"><svg width="28" height="28" viewBox="0 0 28 28"><rect x="7" y="4" width="1.1" height="18.5" fill="#008000"/><rect x="10" y="4" width="1.1" height="18.5" fill="#008000"/><rect x="13" y="4" width="1.1" height="18.5" fill="#008000"/><rect x="16" y="4" width="1.1" height="18.5" fill="#008000"/><rect x="19" y="4" width="1.1" height="18.5" fill="#008000"/></svg></div>
<div class="btn" style="left:660px;top:290px"><svg width="28" height="28" viewBox="0 0 28 28"><rect x="4" y="7" width="19" height="1.1" fill="#008000"/><rect x="4" y="10" width="19" height="1.1" fill="#008000"/><rect x="4" y="13" width="19" height="1.1" fill="#008000"/><rect x="4" y="16" width="19" height="1.1" fill="#008000"/><rect x="4" y="19" width="19" height="1.1" fill="#008000"/></svg></div>
<div class="btn" style="left:688px;top:290px"><svg width="28" height="28" viewBox="0 0 28 28"><rect x="12.5" y="10.5" width="8.5" height="7.5" fill="#c8c8c8" stroke="#444" stroke-width="1"/><rect x="13.8" y="11.8" width="6" height="4.6" fill="#2a5fd8"/><rect x="14.8" y="12.6" width="4" height="2.6" fill="#4a88e8"/><rect x="16" y="18" width="2" height="1.2" fill="#222"/><rect x="14" y="19" width="6" height="1.2" fill="#222"/><circle cx="9.5" cy="16.3" r="4.4" fill="#d4d4bc" stroke="#7a7a7a" stroke-width="1"/><circle cx="9.5" cy="16.3" r="1.2" fill="#fff" stroke="#333" stroke-width="0.9"/><path d="M12.8 6.5Q9 5 8.8 8.5V9.5" fill="none" stroke="#e8c000" stroke-width="2.2"/><path d="M5.6 9.3L8.8 12.6L12 9.3Z" fill="#f0c800" stroke="#9a6a00" stroke-width="0.6"/></svg></div>
<div class="btn" style="left:604px;top:318px"><svg width="28" height="28" viewBox="0 0 28 28"><path d="M7.5 20.5V9.2Q7.5 8.3 8.4 8.3H10.8L11.8 9.3H15.5V20.5Z" fill="#f0cf58" stroke="#cf9f10" stroke-width="1"/><path d="M7.8 20.5L10.2 13.8H20.2L17.2 20.5Z" fill="#fde98e" stroke="#d8a818" stroke-width="1"/><path d="M13 8.2H16.3Q18.6 8.2 19.3 11" fill="none" stroke="#1e9e1e" stroke-width="2.3"/><path d="M16.6 10.6L19.6 14.6L21.9 10Z" fill="#1e9e1e"/></svg></div>
<div class="btn" style="left:632px;top:318px"><svg width="28" height="28" viewBox="0 0 28 28"><rect x="6.5" y="6.5" width="13" height="13" fill="#e8d080" stroke="#1e2a6a" stroke-width="1"/><path d="M6.5 6.5V19.5" stroke="#2a6a2a" stroke-width="1"/><path d="M6.5 6.5H19" stroke="#2a6a2a" stroke-width="1"/><rect x="7" y="7" width="1" height="12" fill="#f4e090"/><rect x="8.5" y="7" width="9" height="6.3" fill="#f6f6dc" stroke="#2a6a2a" stroke-width="0.8"/><path d="M11 12.5L16.5 7.5" stroke="#d8d8a8" stroke-width="1.2"/><path d="M13.5 12.5L17 9.3" stroke="#e0e0b0" stroke-width="0.8"/><rect x="9" y="14.5" width="8" height="5" fill="#283070"/><rect x="10" y="15.5" width="3.2" height="3.5" fill="#c87838"/><rect x="14" y="15.5" width="2" height="3.5" fill="#f0f0d0"/><rect x="18" y="8" width="1" height="11" fill="#e0b868"/><circle cx="18.3" cy="7.8" r="0.7" fill="#fff"/></svg></div>
<div class="btn" style="left:660px;top:318px"><svg width="28" height="28" viewBox="0 0 28 28"><rect x="6.5" y="6.5" width="10" height="10" fill="#c8c8c8" stroke="#505050" stroke-width="1"/><rect x="7" y="7" width="1" height="9" fill="#fff"/><rect x="8.5" y="7" width="6" height="4.5" fill="#f0f0f0" stroke="#707070" stroke-width="0.8"/><rect x="9" y="12.5" width="5.5" height="4" fill="#909090"/><rect x="9.8" y="13.3" width="1.8" height="3" fill="#d8d8d8"/><rect x="12.5" y="13.3" width="1.5" height="3" fill="#e8e8e8"/><rect x="13" y="18" width="2" height="2" fill="#3a3a70"/><rect x="16" y="18" width="2" height="2" fill="#3a3a70"/><rect x="19" y="18" width="2" height="2" fill="#3a3a70"/></svg></div>
<div class="btn" style="left:688px;top:318px"><svg width="28" height="28" viewBox="0 0 28 28"><rect x="10.5" y="7.5" width="6" height="2.5" rx="1" fill="#888" stroke="#222" stroke-width="1"/><rect x="5.5" y="9.5" width="16" height="9" rx="1.5" fill="#8a8a8a" stroke="#222" stroke-width="1"/><circle cx="13.8" cy="14.5" r="3.6" fill="#666" stroke="#444" stroke-width="1"/><rect x="12" y="17" width="4" height="2.5" fill="#555"/><circle cx="13.8" cy="15.8" r="1.6" fill="#f0a000"/></svg></div>
<div id="combo"><div id="ctext">2 m</div><div id="cbtn"><svg width="7" height="4"><path d="M0 0H6L3 3.5Z" fill="#000"/></svg></div></div>
</body></html>
